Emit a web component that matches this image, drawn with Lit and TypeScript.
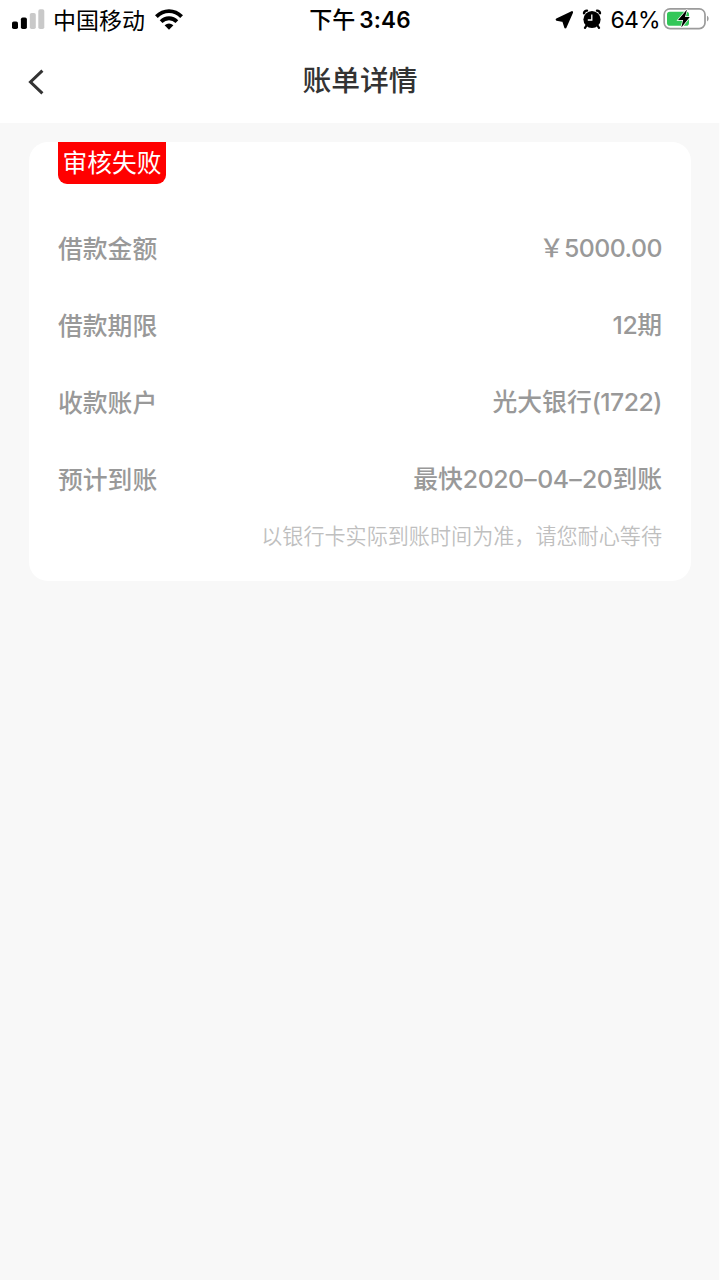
import { LitElement, html, css, svg } from "lit";
import { customElement, property } from "lit/decorators.js";

const signal = svg`
  <rect x="0" y="12.5" width="6" height="7.5" rx="1.8" fill="#000"/>
  <rect x="8.9" y="8.5" width="6" height="11.5" rx="1.8" fill="#000"/>
  <rect x="17.8" y="4" width="6" height="16" rx="1.8" fill="#c9c9c9"/>
  <rect x="26.3" y="0.2" width="6" height="19.8" rx="1.8" fill="#c9c9c9"/>`;

@customElement("status-bar")
export class StatusBar extends LitElement {
  static styles = css`
    :host {
      display: grid;
      grid-template-columns: 1fr auto 1fr;
      height: 40px;
      padding: 0 11px 0 12px;
      box-sizing: border-box;
      align-items: center;
      color: #000;
      font: 400 23px/40px Inter, "Noto Sans CJK SC", sans-serif;
      white-space: nowrap;
    }
    .side { display: flex; align-items: center; height: 40px; }
    .right { justify-content: flex-end; }
    svg { display: block; flex: none; margin-bottom: 2px; }
    .carrier { margin: 1px 10px 0 8px; }
    .time { font-weight: 500; margin-right: 1px; }
    .digits { font-weight: 600; font-size: 22.5px; margin-left: 4px; letter-spacing: 0.1px; }
    .percent { margin: 0 3px 0 8px; font-size: 23px; letter-spacing: -0.7px; }
    .alarm { margin-left: 9px; }
  `;

  render() {
    return html`
      <div class="side">
        <svg width="33" height="20" viewBox="0 0 33 20">${signal}</svg>
        <span class="carrier">中国移动</span>
        <svg width="28" height="21" viewBox="0 0 28 21">
          <g fill="none" stroke="#000" stroke-width="3.9">
            <path d="M1.4 7.6C8.6.3 19.4.3 26.6 7.6"/>
            <path d="M6.1 12.6C10.6 8.2 17.4 8.2 21.9 12.6"/>
          </g>
          <path fill="#000" d="M9.6 16.2Q14 12.6 18.4 16.2L14 20.7Z"/>
        </svg>
      </div>
      <div class="time">下午<span class="digits">3:46</span></div>
      <div class="side right">
        <svg width="18" height="20" viewBox="0 0 18 20">
          <path d="M17 3.2L1.8 10.6 8.3 11.8 10.4 18.3Z" fill="#000" stroke="#000" stroke-width="2.2" stroke-linejoin="round"/>
        </svg>
        <svg class="alarm" width="20" height="20" viewBox="0 0 20 20">
          <circle cx="10" cy="10.5" r="8.6" fill="#000"/>
          <path d="M2 4.2A3 3 0 0 1 5 1.6M18 4.2A3 3 0 0 0 15 1.6" fill="none" stroke="#000" stroke-width="2.4" stroke-linecap="round"/>
          <path d="M4.4 16.6L3 18.8M15.6 16.6L17 18.8" stroke="#000" stroke-width="2.2" stroke-linecap="round"/>
          <path d="M9.8 5.6V11H5.8" fill="none" stroke="#fff" stroke-width="1.3"/>
        </svg>
        <span class="percent">64%</span>
        <svg width="46" height="24" viewBox="0 0 46 24">
          <rect x="1.2" y="1.8" width="40.8" height="19.8" rx="5.8" fill="#fff" stroke="#9b9b9b" stroke-width="1.7"/>
          <path d="M44 8.7C46.2 9.9 46.2 13.3 44 14.5Z" fill="#9b9b9b"/>
          <rect x="4" y="4.7" width="22" height="14" rx="2.8" fill="#33c759"/>
          <path d="M24 2.5L15 13.1H20.1L18.3 20.5 26.8 10H22Z" fill="#000" stroke="#fff" stroke-width="1.4" paint-order="stroke"/>
        </svg>
      </div>`;
  }
}

@customElement("bill-row")
export class BillRow extends LitElement {
  @property() label = "";
  @property() value = "";

  static styles = css`
    :host {
      display: flex;
      justify-content: space-between;
      align-items: center;
      height: 76.8px;
      color: #999;
      font: 500 24.8px/36px "Noto Sans CJK SC", sans-serif;
      white-space: nowrap;
    }
    .latin {
      font-family: Inter, sans-serif;
      font-weight: 450;
      letter-spacing: -0.5px;
    }
    .dash {
      display: inline-block;
      margin: 0 0.9px;
    }
  `;

  private renderValue() {
    return this.value.split(/([\d.()]+|–)/).map((part) =>
      part === "–"
        ? html`<span class="latin dash">–</span>`
        : /^[\d.()]+$/.test(part)
          ? html`<span class="latin">${part}</span>`
          : part,
    );
  }

  render() {
    return html`<span>${this.label}</span><span>${this.renderValue()}</span>`;
  }
}

@customElement("app-root")
export class AppRoot extends LitElement {
  private rows = [
    ["借款金额", "￥5000.00"],
    ["借款期限", "12期"],
    ["收款账户", "光大银行(1722)"],
    ["预计到账", "最快2020–04–20到账"],
  ];

  static styles = css`
    :host {
      display: block;
      min-height: 1280px;
      background: #f8f8f8;
      box-shadow: inset -1px 0 #fdfdfd;
      font-family: "Noto Sans CJK SC", sans-serif;
    }
    .top { background: #fff; height: 123px; }
    .nav {
      display: grid;
      grid-template-columns: 100px 1fr 100px;
      align-items: center;
      height: 80px;
    }
    .back { display: block; margin: 3px 0 0 28px; }
    .title {
      margin: 0 0 2px;
      text-align: center;
      color: #333;
      font-size: 28.8px;
      line-height: 40px;
      font-weight: 500;
    }
    .card {
      margin: 19px 29px 0;
      height: 439px;
      box-sizing: border-box;
      padding: 0 29px;
      border-radius: 19px;
      background: #fff;
    }
    .badge {
      width: 108px;
      height: 42px;
      border-radius: 0 0 9px 9px;
      background: #f00;
      color: #fff;
      font-size: 24.7px;
      line-height: 39px;
      text-align: center;
      white-space: nowrap;
    }
    .rows { padding-top: 25px; }
    .hint {
      margin: 1px 0 0;
      color: #bfbfbf;
      text-align: right;
      font-size: 21.1px;
      font-weight: 350;
      line-height: 36px;
      white-space: nowrap;
    }
  `;

  render() {
    return html`
      <header class="top">
        <status-bar></status-bar>
        <nav class="nav">
          <svg class="back" width="17" height="26" viewBox="0 0 17 26">
            <path d="M14.4 1.7L2.5 13 14.4 24.3" fill="none" stroke="#333" stroke-width="3"/>
          </svg>
          <h1 class="title">账单详情</h1>
        </nav>
      </header>
      <main class="card">
        <div class="badge">审核失败</div>
        <div class="rows">
          ${this.rows.map(([l, v]) => html`<bill-row .label=${l} .value=${v}></bill-row>`)}
        </div>
        <p class="hint">以银行卡实际到账时间为准，请您耐心等待</p>
      </main>`;
  }
}
